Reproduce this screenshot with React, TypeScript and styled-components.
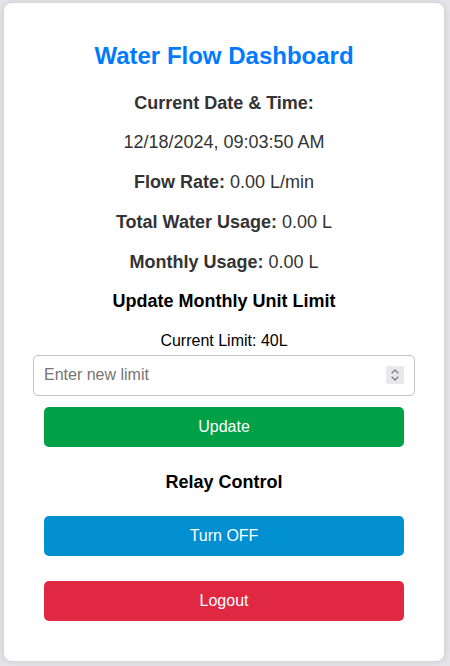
import React, { useState } from "react";
import styled, { createGlobalStyle } from "styled-components";

const GlobalStyle = createGlobalStyle`
  html, body {
    margin: 0;
    padding: 0;
    background: #e4e4e8;
  }
  body {
    font-family: "Liberation Sans", Arial, Helvetica, sans-serif;
  }
`;

const Page = styled.div`
  padding: 3px 6px 5px 4px;
`;

const Card = styled.div`
  box-sizing: border-box;
  width: 440px;
  height: 658px;
  background: #ffffff;
  border-radius: 8px;
  box-shadow: 0 0 6px rgba(0, 0, 0, 0.12);
  padding: 20px 20px 0;
  display: flex;
  flex-direction: column;
  align-items: center;
  text-align: center;
`;

const Title = styled.h2`
  margin: 19px 0 0;
  font-size: 24px;
  line-height: 28px;
  font-weight: 700;
  color: #007bff;
`;

const InfoLine = styled.p<{ $gap: number }>`
  margin: ${(p) => p.$gap}px 0 0;
  font-size: 18px;
  line-height: 20px;
  color: #333333;
`;

const Label = styled.strong`
  font-weight: 700;
`;

const SectionTitle = styled.h3<{ $gap: number }>`
  margin: ${(p) => p.$gap}px 0 0;
  font-size: 18px;
  line-height: 20px;
  font-weight: 700;
  color: #000000;
`;

const LimitText = styled.p`
  margin: 19.5px 0 0;
  font-size: 16px;
  line-height: 20px;
  color: #000000;
`;

const InputWrap = styled.div`
  position: relative;
  margin: 4px 0 0;
`;

const LimitInput = styled.input`
  box-sizing: content-box;
  display: block;
  width: 360px;
  height: 19px;
  margin: 0;
  padding: 10px;
  border: 1px solid #c4c4c4;
  border-radius: 5px;
  font-family: "Liberation Sans", Arial, Helvetica, sans-serif;
  font-size: 16px;
  color: #222;
  background: #fff;
  outline: none;
  -moz-appearance: textfield;
  &::placeholder {
    color: #757575;
  }
  &::-webkit-inner-spin-button,
  &::-webkit-outer-spin-button {
    -webkit-appearance: none;
    margin: 0;
  }
`;

const Spinner = styled.span`
  position: absolute;
  right: 11px;
  top: 11px;
  width: 18px;
  height: 18px;
  border-radius: 2px;
  background: #e8e8ed;
  display: flex;
  align-items: center;
  justify-content: center;
  pointer-events: none;
`;

const ActionButton = styled.button<{ $bg: string; $gap: number }>`
  box-sizing: border-box;
  width: 360px;
  height: 40px;
  margin: ${(p) => p.$gap}px 0 0;
  border: none;
  border-radius: 5px;
  background: ${(p) => p.$bg};
  color: #ffffff;
  font-family: "Liberation Sans", Arial, Helvetica, sans-serif;
  font-size: 16px;
  cursor: pointer;
`;

export default function App() {
  const [limit, setLimit] = useState("");
  return (
    <>
      <GlobalStyle />
      <Page>
        <Card>
          <Title>Water Flow Dashboard</Title>
          <InfoLine $gap={23}>
            <Label>Current Date &amp; Time:</Label>
          </InfoLine>
          <InfoLine $gap={19}>12/18/2024, 09:03:50 AM</InfoLine>
          <InfoLine $gap={20}>
            <Label>Flow Rate:</Label> 0.00 L/min
          </InfoLine>
          <InfoLine $gap={20}>
            <Label>Total Water Usage:</Label> 0.00 L
          </InfoLine>
          <InfoLine $gap={20}>
            <Label>Monthly Usage:</Label> 0.00 L
          </InfoLine>
          <SectionTitle $gap={19}>Update Monthly Unit Limit</SectionTitle>
          <LimitText>Current Limit: 40L</LimitText>
          <InputWrap>
            <LimitInput
              type="number"
              placeholder="Enter new limit"
              value={limit}
              onChange={(e) => setLimit(e.target.value)}
            />
            <Spinner>
              <svg width="10" height="14" viewBox="0 0 10 14" fill="none">
                <path d="M2 5 L5 2 L8 5" stroke="#7a7a80" strokeWidth="1.2" strokeLinecap="round" strokeLinejoin="round" />
                <path d="M2 9 L5 12 L8 9" stroke="#7a7a80" strokeWidth="1.2" strokeLinecap="round" strokeLinejoin="round" />
              </svg>
            </Spinner>
          </InputWrap>
          <ActionButton $bg="#00a046" $gap={11.5}>Update</ActionButton>
          <SectionTitle $gap={25}>Relay Control</SectionTitle>
          <ActionButton $bg="#0290d0" $gap={24}>Turn OFF</ActionButton>
          <ActionButton $bg="#e02843" $gap={25}>Logout</ActionButton>
        </Card>
      </Page>
    </>
  );
}
